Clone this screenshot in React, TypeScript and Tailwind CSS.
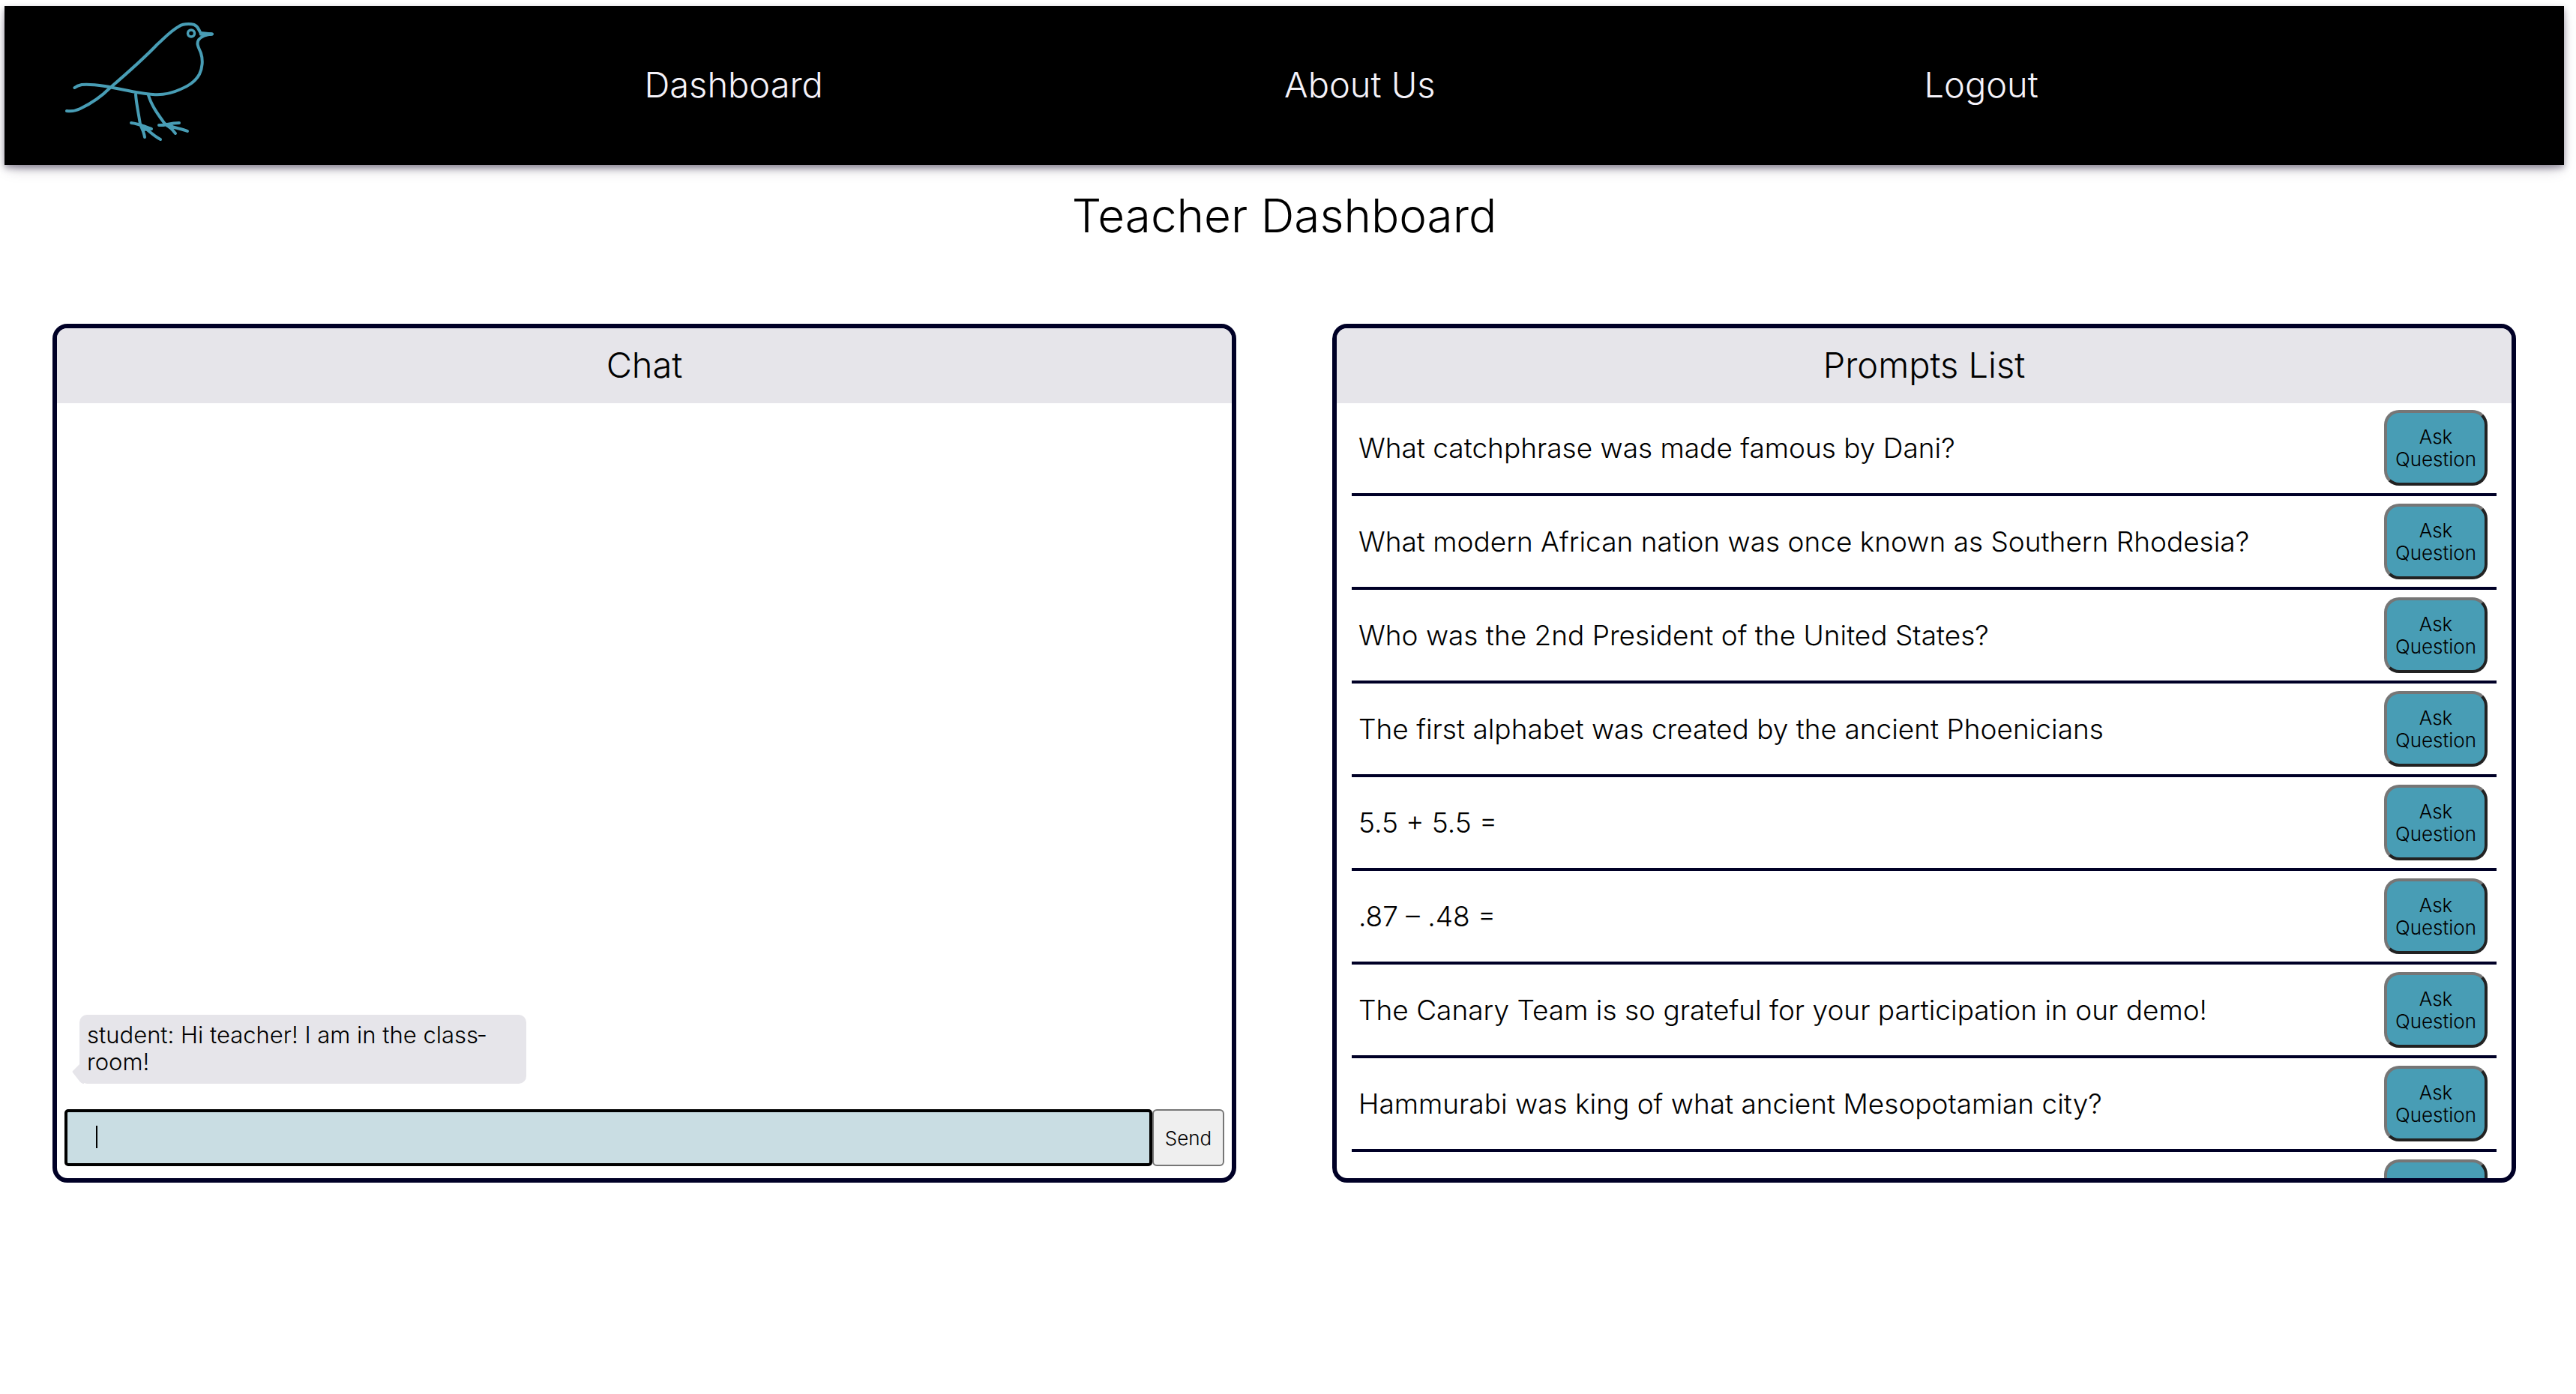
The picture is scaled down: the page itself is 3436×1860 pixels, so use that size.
const prompts = [
  'What catchphrase was made famous by Dani?',
  'What modern African nation was once known as Southern Rhodesia?',
  'Who was the 2nd President of the United States?',
  'The first alphabet was created by the ancient Phoenicians',
  '5.5 + 5.5 =',
  '.87 – .48 =',
  'The Canary Team is so grateful for your participation in our demo!',
  'Hammurabi was king of what ancient Mesopotamian city?',
  '',
];

const links = ['Dashboard', 'About Us', 'Logout'];

function BirdLogo() {
  return (
    <svg
      viewBox="80 20 212 176"
      className="h-[176px] w-[212px]"
      fill="none"
      stroke="#489db5"
      strokeWidth="4"
      strokeLinecap="round"
      strokeLinejoin="round"
      role="img"
      aria-label="Canary"
    >
      <path d="M89 148C97 149 101 148 107 145C124 137 136 128 147 117C168 99 190 80 210 59C220 50 228 41 239 35C245 31 258 31 262 35C265 38 267 43 268 45" />
      <path d="M268 44L283 45.500C275 46 269 48 265 53C261 59 266 65 268 71C271 80 270 91 266 99C260 110 251 115 241 119C228 125 216 127 204 126C184 125 164 119 140 115C127 113 117 112 109 113C104 114 102 115 99.500 117" />
      <path d="M268 45.500H282" strokeWidth="4.500" />
      <circle cx="255" cy="44.500" r="4.500" strokeWidth="3.500" />
      <path d="M181 126C182 140 185 152 187 166" />
      <path d="M198 127C202 141 211 153 219 164" />
      <path d="M175 164C185 165 193 169 202 172M187 166C190 172 192 177 193 183M189 167C197 173 204 181 214 186M188 167L194 171" />
      <path d="M186 166L194 168L198 173L192 174Z" fill="#489db5" strokeWidth="2" />
      <path d="M212 167C220 168 225 164 239 164M220 165C226 168 230 173 234 178M222 166C231 171 241 171 250 175M222 167L230 171" />
      <path d="M218 165L228 165L232 171L226 171Z" fill="#489db5" strokeWidth="2" />
    </svg>
  );
}

export default function App() {
  return (
    <div className="min-h-screen bg-white pt-2 pr-4 pl-[6px] font-['Inter','Liberation_Sans',sans-serif] font-light text-black">
      <nav className="grid h-[212px] grid-cols-4 bg-black shadow-[0_4px_8px_rgba(45,35,66,0.4),0_8px_18px_-6px_rgba(45,35,66,0.4)]">
        <a href="#home" className="pt-3 pl-[74px]">
          <BirdLogo />
        </a>
        {links.map((label) => (
          <a key={label} href="#" className="justify-self-start pt-[75px] text-[47px] leading-[60px] text-[#f5f3fa]">
            {label}
          </a>
        ))}
      </nav>

      <main>
        <h1 className="pt-8 text-center text-[62px] leading-[72px]">Teacher Dashboard</h1>

        <div className="mx-16 mt-[108px] grid grid-cols-2 gap-32">
          <section className="flex flex-col overflow-hidden rounded-[20px] border-[6px] border-[#000026]">
            <h2 className="h-[100px] bg-[#e6e5ea] text-center text-[47px] leading-[98px]">Chat</h2>
            <div className="flex flex-1 flex-col justify-end px-[30px] pb-[34px]">
              <div className="relative w-[596px] rounded-[10px] bg-[#e6e5ea] px-[10px] pt-[9px] pb-[11px] text-[31px] leading-9">
                <svg viewBox="0 0 16 26" className="absolute bottom-0 -left-[10px] h-[26px] w-4" fill="#e6e5ea" aria-hidden="true">
                  <path d="M10 0L1 9Q0 10 1 11L8 20Q12 26 16 26V0Z" />
                </svg>
                {'student: Hi teacher! I am in the class\u00adroom!'}
              </div>
            </div>
            <form className="flex px-[10px] pb-4" onSubmit={(e) => e.preventDefault()}>
              <div className="relative flex-1">
                <input
                  type="text"
                  aria-label="Message"
                  className="block h-[76px] w-full rounded-[5px] border-4 border-black bg-[#c9dde3] px-10 text-[26px] caret-transparent outline-none"
                />
                <span className="absolute top-[22px] left-[42px] h-[30px] w-[2px] bg-black" />
              </div>
              <button type="submit" className="h-[76px] w-24 rounded-[6px] border-2 border-[#767676] bg-[#efefef] text-[26px]">
                Send
              </button>
            </form>
          </section>

          <section className="overflow-hidden rounded-[20px] border-[6px] border-[#000026]">
            <h2 className="h-[100px] bg-[#e6e5ea] text-center text-[47px] leading-[98px]">Prompts List</h2>
            <ul className="-mt-px h-[1035px] overflow-y-auto px-5 [scrollbar-width:none]">
              {prompts.map((prompt, i) => (
                <li key={i} className="flex items-center justify-between border-b-4 border-[#000026] py-[10px] pr-3 pl-[9px]">
                  <span className="text-[37px] leading-[46px]">{prompt}</span>
                  <button
                    type="button"
                    className="h-[101px] w-[138px] rounded-[20px] border-4 border-t-[#767676] border-r-[#222222] border-b-[#222222] border-l-[#767676] bg-[#489db5] text-[26px] leading-[30px]"
                  >
                    Ask Question
                  </button>
                </li>
              ))}
            </ul>
          </section>
        </div>
      </main>
    </div>
  );
}
